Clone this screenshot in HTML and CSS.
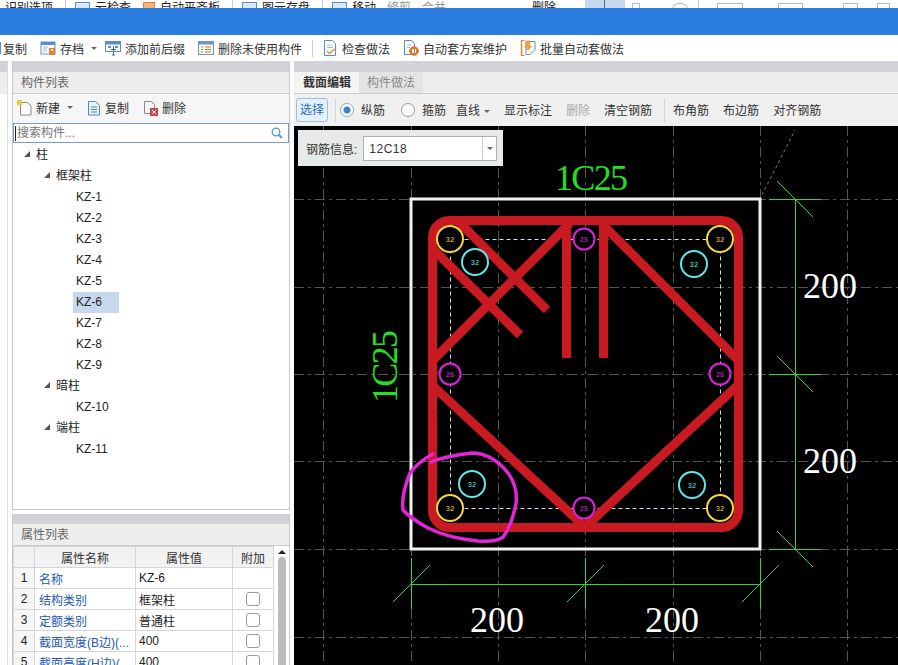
FILE: index.html
```html
<!DOCTYPE html>
<html lang="zh-CN">
<head>
    <meta charset="UTF-8">
    <title>截面编辑</title>
    <link rel="stylesheet" href="styles.css">
</head>
<body>

<svg class="icon-defs">
    <symbol id="i-save" viewBox="0 0 16 16">
        <rect x="1" y="2" width="14" height="12" fill="#fff" stroke="#5b8fc4"/>
        <rect x="1" y="2" width="14" height="3" fill="#5b8fc4"/>
        <path d="M3 7h5M3 9h4M3 11h4" stroke="#9db9d6"/>
        <rect x="9" y="8" width="6" height="7" fill="#e8812c"/>
        <rect x="11" y="9" width="2" height="2" fill="#fff"/>
    </symbol>
    <symbol id="i-prefix" viewBox="0 0 16 16">
        <rect x="0.5" y="1.5" width="15" height="10" fill="#fff" stroke="#5b8fc4"/>
        <rect x="0.5" y="1.5" width="15" height="3" fill="#5b8fc4"/>
        <path d="M3 7h3M10 7h3" stroke="#5b8fc4" stroke-width="2"/>
        <path d="M6 9.500h5M8.500 6v9M7 15h3" stroke="#2f6ea8"/>
    </symbol>
    <symbol id="i-clean" viewBox="0 0 16 16">
        <rect x="0.500" y="1.500" width="15" height="13" fill="#fdf6df" stroke="#6f97c2"/>
        <rect x="0.500" y="1.500" width="15" height="3" fill="#6f97c2"/>
        <path d="M3 7h2M7 7h6M3 9.500h2M7 9.500h6M3 12h2M7 12h6" stroke="#8a8a8a"/>
    </symbol>
    <symbol id="i-check" viewBox="0 0 16 16">
        <path d="M2.500 0.500h8l3 3v12h-11z" fill="#fff" stroke="#5b8fc4"/>
        <path d="M5 5h5M5 7.500h6" stroke="#9db9d6"/>
        <path d="M5 11l2.500 2.500L14 8" fill="none" stroke="#e0923c" stroke-width="1.500"/>
    </symbol>
    <symbol id="i-auto" viewBox="0 0 16 16">
        <path d="M1.500 0.500h7l3 3v11h-10z" fill="#fff" stroke="#5b8fc4"/>
        <path d="M4 5h4M4 7.500h3" stroke="#9db9d6"/>
        <circle cx="11" cy="11" r="3.500" fill="none" stroke="#e8761f" stroke-width="2.500"/>
        <path d="M11 6v2M11 14v2M6 11h2M14 11h2" stroke="#e8761f" stroke-width="1.500"/>
    </symbol>
    <symbol id="i-batch" viewBox="0 0 16 16">
        <path d="M4.500 0.500h-3v15h3" fill="none" stroke="#e8862e" stroke-width="1.500"/>
        <path d="M6 1.500h9v8l-5 5h-4z" fill="#fff" stroke="#5b8fc4"/>
        <path d="M6 1h3.500v5.500h2L8 10 4.500 6.500h1.500z" fill="#f3a34a" stroke="#e8862e" stroke-width="0.700"/>
    </symbol>
    <symbol id="i-new" viewBox="0 0 15 16">
        <path d="M3.500 2.500h7l3.500 3.500v9h-10.500z" fill="#fff" stroke="#8a8a8a"/>
        <rect x="0" y="0" width="5" height="5" fill="#f4c93c"/>
    </symbol>
    <symbol id="i-copy" viewBox="0 0 14 16">
        <path d="M1.500 1.500h7l4 4v9.500h-11z" fill="#eaf2fa" stroke="#4f86bd"/>
        <path d="M4 7h6M4 9.500h6M4 12h6" stroke="#4f86bd"/>
    </symbol>
    <symbol id="i-delete" viewBox="0 0 15 16">
        <path d="M1.500 1.500h7l3 3v9h-10z" fill="#f4f4f4" stroke="#8a8a8a"/>
        <rect x="7" y="8" width="8" height="8" fill="#c9474f"/>
        <path d="M9 10l4 4M13 10l-4 4" stroke="#fff"/>
    </symbol>
</svg>

<div class="app">
    <!-- ribbon row, only its lower edge is cut off by the window title -->
    <div class="ribbon-strip">
        <span class="rib-text rib-first">识别选项</span>
        <i class="rib-sep"></i>
        <span class="rib-icon rib-blue"></span>
        <span class="rib-text">云检查</span>
        <span class="rib-icon rib-orange"></span>
        <span class="rib-text">自动平齐板</span>
        <i class="rib-sep"></i>
        <span class="rib-icon rib-blue"></span>
        <span class="rib-text">图元存盘</span>
        <i class="rib-sep"></i>
        <span class="rib-icon rib-blue"></span>
        <span class="rib-text">移动</span>
        <span class="rib-text rib-muted">修剪</span>
        <span class="rib-text rib-muted">合并</span>
        <span class="rib-text rib-delete">删除</span>
        <span class="rib-selected"></span>
        <span class="rib-outline rib-o1"></span>
        <span class="rib-outline rib-o2"></span>
        <i class="rib-sep rib-sep-last"></i>
        <span class="rib-outline rib-o3"></span>
        <span class="rib-outline rib-o4"></span>
        <span class="rib-outline rib-o5"></span>
        <span class="rib-outline rib-o6"></span>
    </div>
    <div class="title-bar"></div>

    <div class="main-toolbar">
        <i class="cut-icon"></i>
        <span class="tool">复制</span>
        <span class="tool"><svg class="icon"><use href="#i-save"/></svg>存档<i class="caret"></i></span>
        <span class="tool"><svg class="icon"><use href="#i-prefix"/></svg>添加前后缀</span>
        <span class="tool"><svg class="icon"><use href="#i-clean"/></svg>删除未使用构件</span>
        <i class="main-sep"></i>
        <span class="tool"><svg class="icon"><use href="#i-check"/></svg>检查做法</span>
        <span class="tool"><svg class="icon"><use href="#i-auto"/></svg>自动套方案维护</span>
        <span class="tool"><svg class="icon"><use href="#i-batch"/></svg>批量自动套做法</span>
    </div>

    <div class="workspace">
        <div class="gutter"></div>

        <div class="side">
            <div class="pane tree-pane">
                <div class="pane-band"></div>
                <div class="pane-head">构件列表</div>
                <div class="pane-tools">
                    <span class="tool"><svg class="icon-new"><use href="#i-new"/></svg>新建<i class="caret"></i></span>
                    <span class="tool"><svg class="icon-copy"><use href="#i-copy"/></svg>复制</span>
                    <span class="tool"><svg class="icon-new"><use href="#i-delete"/></svg>删除</span>
                </div>
                <div class="search">
                    <span class="search-text">搜索构件...</span>
                    <svg class="search-icon" viewBox="0 0 12 12">
                        <circle cx="5" cy="5" r="3.800" fill="#eef6fc" stroke="#5b96c4" stroke-width="1.300"/>
                        <path d="M8 8l3 3" stroke="#5b96c4" stroke-width="2"/>
                    </svg>
                </div>
                <ul class="tree">
                    <li class="lvl1"><i class="tree-arrow"></i>柱</li>
                    <li class="lvl2"><i class="tree-arrow"></i>框架柱</li>
                    <li class="lvl3"><span>KZ-1</span></li>
                    <li class="lvl3"><span>KZ-2</span></li>
                    <li class="lvl3"><span>KZ-3</span></li>
                    <li class="lvl3"><span>KZ-4</span></li>
                    <li class="lvl3"><span>KZ-5</span></li>
                    <li class="lvl3"><span class="selected">KZ-6</span></li>
                    <li class="lvl3"><span>KZ-7</span></li>
                    <li class="lvl3"><span>KZ-8</span></li>
                    <li class="lvl3"><span>KZ-9</span></li>
                    <li class="lvl2"><i class="tree-arrow"></i>暗柱</li>
                    <li class="lvl3"><span>KZ-10</span></li>
                    <li class="lvl2"><i class="tree-arrow"></i>端柱</li>
                    <li class="lvl3"><span>KZ-11</span></li>
                </ul>
            </div>

            <div class="pane prop-pane">
                <div class="pane-band"></div>
                <div class="pane-head">属性列表</div>
                <div class="prop-body">
                    <table class="prop-table">
                        <colgroup>
                            <col class="col-num"><col class="col-name"><col class="col-value"><col class="col-add">
                        </colgroup>
                        <thead>
                            <tr><th></th><th>属性名称</th><th>属性值</th><th>附加</th></tr>
                        </thead>
                        <tbody>
                            <tr><td class="num">1</td><td class="name">名称</td><td>KZ-6</td><td></td></tr>
                            <tr><td class="num">2</td><td class="name">结构类别</td><td>框架柱</td><td class="add"><i class="check"></i></td></tr>
                            <tr><td class="num">3</td><td class="name">定额类别</td><td>普通柱</td><td class="add"><i class="check"></i></td></tr>
                            <tr><td class="num">4</td><td class="name">截面宽度(B边)(...</td><td>400</td><td class="add"><i class="check"></i></td></tr>
                            <tr><td class="num">5</td><td class="name">截面高度(H边)(...</td><td>400</td><td class="add"><i class="check"></i></td></tr>
                        </tbody>
                    </table>
                    <div class="scrollbar">
                        <i class="scroll-up"></i>
                        <div class="scroll-thumb"></div>
                    </div>
                </div>
            </div>
        </div>

        <div class="editor">
            <div class="pane-band"></div>
            <div class="tabs">
                <span class="tab tab-active">截面编辑</span>
                <span class="tab">构件做法</span>
            </div>
            <div class="edit-tools">
                <span class="select-btn">选择</span>
                <i class="edit-sep"></i>
                <span class="radio-item"><i class="radio radio-on"></i>纵筋</span>
                <span class="radio-item radio-second"><i class="radio"></i>箍筋</span>
                <span class="line-tool">直线<i class="caret"></i></span>
                <span>显示标注</span>
                <span class="disabled">删除</span>
                <span>清空钢筋</span>
                <i class="edit-sep edit-sep2"></i>
                <span>布角筋</span>
                <span>布边筋</span>
                <span>对齐钢筋</span>
            </div>

            <div class="canvas">
                <svg class="drawing" viewBox="294 126 604 539" width="604" height="539">
                    <!-- axis grid -->
                    <g class="grid">
                        <path d="M323.500 126V665M411.500 126V665M498.500 126V665M585.500 126V665M673.500 126V665M760.500 126V665M847.500 126V665"/>
                        <path d="M294 199.500H898M294 287.500H898M294 374.500H898M294 461.500H898M294 549.500H898M294 637.500H898"/>
                    </g>
                    <path class="leader" d="M762 195L795 130"/>

                    <rect class="section" x="411" y="199" width="349" height="350"/>
                    <rect class="bar-line" x="450.500" y="239.500" width="270" height="269"/>

                    <!-- stirrups -->
                    <g class="stirrup">
                        <rect x="432.500" y="220.500" width="306" height="307" rx="17"/>
                        <path d="M570 223L433 360M603 225L737 359M434 387L585 527L737 386"/>
                        <path d="M566.500 221V358M603.500 221V358"/>
                        <path d="M459 222L547 310M433 249L520 335"/>
                    </g>

                    <!-- bars -->
                    <g class="bar bar-corner">
                        <circle cx="450" cy="239" r="13"/><text x="450" y="241.500">32</text>
                        <circle cx="720" cy="239" r="13"/><text x="720" y="241.500">32</text>
                        <circle cx="450" cy="508" r="13"/><text x="450" y="510.500">32</text>
                        <circle cx="720" cy="508" r="13"/><text x="720" y="510.500">32</text>
                    </g>
                    <g class="bar bar-inner">
                        <circle cx="475" cy="262" r="13"/><text x="475" y="264.500">32</text>
                        <circle cx="694" cy="264" r="13"/><text x="694" y="266.500">32</text>
                        <circle cx="692" cy="485" r="13"/><text x="692" y="487.500">32</text>
                        <circle cx="472" cy="484" r="13"/><text x="472" y="486.500">32</text>
                    </g>
                    <g class="bar bar-edge">
                        <circle cx="584" cy="239" r="10.500"/><text x="584" y="241.500">25</text>
                        <circle cx="720" cy="374" r="10.500"/><text x="720" y="376.500">25</text>
                        <circle cx="450" cy="374" r="10.500"/><text x="450" y="376.500">25</text>
                        <circle cx="584" cy="508" r="10.500"/><text x="584" y="510.500">25</text>
                    </g>

                    <!-- dimensions -->
                    <g class="dim">
                        <path d="M795.500 199V549M769 199.500H821M769 374.500H821M769 549.500H821"/>
                        <path d="M777 181L813 217M777 356L813 392M777 531L813 567"/>
                        <path d="M411 584.500H760M411.500 558V609M585.500 558V609M760.500 558V609"/>
                        <path d="M393 602L430 565M567 602L604 565M742 602L779 565"/>
                    </g>
                    <text class="dim-text" x="803" y="298">200</text>
                    <text class="dim-text" x="803" y="473">200</text>
                    <text class="dim-text" x="470" y="632">200</text>
                    <text class="dim-text" x="645" y="632">200</text>
                    <text class="rebar-text" x="555" y="190" textLength="73">1C25</text>
                    <text class="rebar-text" transform="translate(397 403) rotate(-90)" textLength="73">1C25</text>

                    <!-- hand drawn mark -->
                    <path class="mark" d="M431 462Q445 456 472 453Q492 453 508 473Q518 487 516 503Q512 525 503 537Q498 542 478 541Q448 538 428 528Q410 518 403 510Q401 495 410 473Q418 462 433 454"/>
                </svg>

                <div class="rebar-info">
                    <span>钢筋信息:</span>
                    <div class="rebar-select">
                        <span class="rebar-value">12C18</span>
                        <span class="rebar-drop"><i class="caret"></i></span>
                    </div>
                </div>
            </div>
        </div>
    </div>
</div>

</body>
</html>
```

FILE: styles.css
```css
* {
    box-sizing: border-box;
}

html, body {
    margin: 0;
    padding: 0;
    height: 100%;
    overflow: hidden;
}

body {
    font-family: "Liberation Sans", "Noto Sans CJK SC", sans-serif;
    font-size: 12px;
    color: #333;
    background-color: white;
}

i {
    font-style: normal;
}

.icon-defs {
    display: none;
}

.app {
    display: flex;
    flex-direction: column;
    width: 898px;
    height: 665px;
}

/* cut off ribbon */
.ribbon-strip {
    display: flex;
    flex: none;
    height: 8px;
    overflow: hidden;
    line-height: 16px;
    color: #222;
    background-color: white;
}

.rib-text {
    flex: none;
    margin-left: 5px;
}

.rib-first {
    margin-left: 5px;
}

.rib-sep {
    flex: none;
    width: 1px;
    margin: 0 9px 0 12px;
    background-color: #ccc;
}

.rib-icon {
    flex: none;
    width: 15px;
    height: 12px;
    margin-left: 12px;
    margin-top: 2px;
    border: 1px solid #5b8fc4;
    background-color: #dbe8f5;
}

.rib-sep + .rib-icon {
    margin-left: 0;
}

.rib-orange {
    width: 12px;
    border-color: #e8812c;
    background-color: #f3b27a;
}

.rib-muted {
    margin-left: 11px;
    color: #999;
}

.rib-delete {
    margin-left: 86px;
}

.rib-selected {
    flex: none;
    width: 40px;
    margin-left: 29px;
    background: linear-gradient(90deg, #c5d8f0 19px, #567 19px, #567 20px, #c5d8f0 20px);
}

.rib-outline {
    flex: none;
    height: 12px;
    margin-top: 3px;
    border: 1px solid #bbb;
}

.rib-o1 {
    width: 8px;
    margin-left: 7px;
}

.rib-o2 {
    width: 16px;
    margin-left: 32px;
    border-radius: 50%;
}

.rib-sep-last {
    margin: 0 18px 0 10px;
}

.rib-o3 {
    width: 26px;
}

.rib-o4 {
    width: 25px;
    margin-left: 35px;
}

.rib-o5 {
    width: 15px;
    margin-left: 40px;
}

.rib-o6 {
    width: 13px;
    margin-left: 19px;
}

.title-bar {
    flex: none;
    height: 27px;
    background-color: #2b7ddf;
}

.main-toolbar {
    display: flex;
    flex: none;
    align-items: center;
    gap: 13px;
    height: 26px;
    background-color: white;
}

.cut-icon {
    flex: none;
    width: 1px;
    height: 12px;
    margin-right: -11px;
    background-color: #5b8fc4;
}

.tool {
    display: flex;
    align-items: center;
    gap: 4px;
    white-space: nowrap;
}

.icon {
    width: 16px;
    height: 16px;
}

.icon-new {
    width: 15px;
    height: 16px;
}

.icon-copy {
    width: 14px;
    height: 16px;
}

.caret {
    display: inline-block;
    width: 0;
    height: 0;
    border-left: 3px solid transparent;
    border-right: 3px solid transparent;
    border-top: 3px solid #666;
}

.main-toolbar .caret {
    margin: 0 -5px 0 3px;
}

.main-sep {
    flex: none;
    width: 1px;
    height: 17px;
    margin: 0 -4px 0 -3px;
    background-color: #ccc;
}

.workspace {
    display: flex;
    flex: 1;
    min-height: 0;
}

.gutter {
    flex: none;
    width: 8px;
    border-right: 1px solid #ddd;
    background: linear-gradient(#d2d2d8 11px, #eee 11px, #eee 33px, white 33px);
}

.side {
    display: flex;
    flex: none;
    flex-direction: column;
    gap: 4px;
    width: 286px;
    padding: 0 4px;
}

.pane {
    display: flex;
    flex-direction: column;
    border-left: 1px solid #c8c8c8;
    border-right: 1px solid #c8c8c8;
}

.tree-pane {
    flex: none;
    height: 449px;
    border-bottom: 1px solid #c8c8c8;
}

.prop-pane {
    flex: 1;
    min-height: 0;
    overflow: hidden;
}

.pane-band {
    flex: none;
    height: 11px;
    background-color: #d2d2d8;
}

.prop-pane .pane-band {
    height: 10px;
}

.pane-head {
    flex: none;
    height: 22px;
    padding-left: 8px;
    line-height: 22px;
    color: #666;
    background-color: #eee;
    border-bottom: 1px solid #ccc;
}

.pane-tools {
    display: flex;
    flex: none;
    align-items: center;
    gap: 14px;
    height: 29px;
    padding: 0 0 2px 4px;
    background-color: #f6f6f6;
}

.pane-tools .caret {
    margin-left: 3px;
}

.search {
    display: flex;
    flex: none;
    align-items: center;
    justify-content: space-between;
    height: 20px;
    padding: 0 5px 0 1px;
    border: 1px solid #7a9cc8;
    color: #777;
}

.search-text {
    padding-left: 1px;
    border-left: 1px solid #223;
    line-height: 15px;
}

.search-icon {
    width: 12px;
    height: 12px;
}

.tree {
    flex: 1;
    margin: 0;
    padding: 2px 0 0;
    list-style: none;
    color: #222;
}

.tree li {
    height: 21px;
    line-height: 21px;
    white-space: nowrap;
}

.lvl1 {
    padding-left: 11px;
}

.lvl2 {
    padding-left: 31px;
}

.lvl3 {
    padding-left: 60px;
}

.lvl3 span {
    display: inline-block;
    height: 21px;
    padding: 0 17px 0 3px;
}

.tree .selected {
    background-color: #c6d8ee;
}

.tree-arrow {
    display: inline-block;
    width: 0;
    height: 0;
    margin-right: 6px;
    vertical-align: 2px;
    border-left: 6px solid transparent;
    border-bottom: 6px solid #555;
}

.prop-body {
    display: flex;
    flex: 1;
}

.prop-table {
    flex: none;
    width: 260px;
    height: 0;
    border-collapse: collapse;
    table-layout: fixed;
}

.col-num {
    width: 21px;
}

.col-name {
    width: 101px;
}

.col-value {
    width: 97px;
}

.col-add {
    width: 41px;
}

.prop-table th,
.prop-table td {
    height: 21px;
    padding: 0 3px;
    border: 1px solid #d6d6d6;
    overflow: hidden;
    white-space: nowrap;
    font-weight: normal;
}

.prop-table th {
    text-align: center;
    background-color: #f2f2f2;
}

.prop-table td {
    color: #222;
}

.prop-table .num {
    text-align: center;
    background-color: #f6f6f6;
}

.prop-table .name {
    padding-left: 4px;
    color: #2458b8;
}

.prop-table .add {
    text-align: center;
}

.check {
    display: inline-block;
    width: 14px;
    height: 14px;
    margin-top: 2px;
    border: 1px solid #999;
    border-radius: 3px;
    background-color: white;
}

.scrollbar {
    display: flex;
    flex: 1;
    flex-direction: column;
    align-items: center;
    padding-top: 4px;
    gap: 3px;
}

.scroll-up {
    width: 0;
    height: 0;
    border-left: 4px solid transparent;
    border-right: 4px solid transparent;
    border-bottom: 4px solid #222;
}

.scroll-thumb {
    flex: 1;
    width: 8px;
    border-radius: 4px 4px 0 0;
    background-color: #bcbcbc;
}

/* right side */
.editor {
    display: flex;
    flex: 1;
    flex-direction: column;
    min-width: 0;
}

.tabs {
    display: flex;
    flex: none;
    height: 22px;
    padding-left: 1px;
    background-color: #eee;
    border-bottom: 1px solid #ccc;
}

.tab {
    width: 64px;
    line-height: 22px;
    text-align: center;
    color: #888;
    background-color: #e4e4e4;
}

.tab-active {
    font-weight: bold;
    color: #333;
    background-color: #f4f4f4;
}

.edit-tools {
    display: flex;
    flex: none;
    align-items: center;
    gap: 14px;
    height: 32px;
    padding: 0 0 1px 2px;
    white-space: nowrap;
    background-color: #f0f0f0;
}

.select-btn {
    width: 32px;
    height: 24px;
    line-height: 22px;
    text-align: center;
    color: #1a6fc0;
    border: 1px solid #9cc0e0;
    border-radius: 3px;
    background-color: #e6f1fb;
}

.edit-sep {
    flex: none;
    width: 1px;
    height: 24px;
    margin: 0 -10px 0 -7px;
    background-color: #d4d4d4;
}

.edit-sep2 {
    margin: 0 -6px 0 -2px;
}

.radio-item {
    display: flex;
    align-items: center;
    gap: 7px;
}

.radio-second {
    margin-left: 2px;
}

.radio {
    width: 14px;
    height: 14px;
    border: 1px solid #999;
    border-radius: 50%;
    background-color: white;
}

.radio-on {
    border-color: #8ab;
    background: radial-gradient(circle, #3f7fd0 3px, white 4px);
}

.line-tool {
    margin-left: -4px;
}

.line-tool .caret {
    margin-left: 4px;
    vertical-align: 2px;
}

.disabled {
    color: #aaa;
}

.canvas {
    position: relative;
    flex: 1;
    min-height: 0;
    overflow: hidden;
    background-color: black;
}

.drawing {
    display: block;
}

.grid path {
    fill: none;
    stroke: #555;
    stroke-dasharray: 10 4 3 4;
}

.leader {
    fill: none;
    stroke: #777;
    stroke-dasharray: 3 3;
}

.section {
    fill: none;
    stroke: #f2f2f2;
    stroke-width: 3;
}

.bar-line {
    fill: none;
    stroke: #d8dcf0;
    stroke-dasharray: 4 3;
}

.stirrup rect,
.stirrup path {
    fill: none;
    stroke: #c91a22;
    stroke-width: 9;
}

.bar circle {
    fill: black;
    stroke-width: 2;
}

.bar text {
    font-family: "Liberation Mono", monospace;
    font-size: 7px;
    text-anchor: middle;
}

.bar-corner circle {
    stroke: #f5d840;
}

.bar-corner text {
    fill: #f5d840;
}

.bar-inner circle {
    stroke: #5fe8e8;
}

.bar-inner text {
    fill: #5fe8e8;
}

.bar-edge circle {
    stroke: #e020e0;
}

.bar-edge text {
    fill: #e020e0;
}

.dim path {
    fill: none;
    stroke: #35d435;
}

.dim-text {
    font-family: "Liberation Serif", serif;
    font-size: 36px;
    fill: white;
}

.rebar-text {
    font-family: "Liberation Serif", serif;
    font-size: 36px;
    fill: #22e022;
}

.mark {
    fill: none;
    stroke: #e424d8;
    stroke-width: 3.5;
    stroke-linecap: round;
    stroke-linejoin: round;
}

/* floats over the drawing */
.rebar-info {
    position: absolute;
    left: 4px;
    top: 4px;
    display: flex;
    align-items: center;
    gap: 6px;
    width: 205px;
    height: 36px;
    padding: 1px 0 0 8px;
    background-color: #e6eaea;
}

.rebar-select {
    display: flex;
    align-items: center;
    justify-content: space-between;
    width: 134px;
    height: 25px;
    border: 1px solid #b0b0b0;
    background-color: white;
}

.rebar-value {
    padding-left: 5px;
    letter-spacing: 0.5px;
}

.rebar-drop {
    display: flex;
    align-items: center;
    justify-content: center;
    width: 14px;
    height: 23px;
    border-left: 1px solid #ccc;
}
```
